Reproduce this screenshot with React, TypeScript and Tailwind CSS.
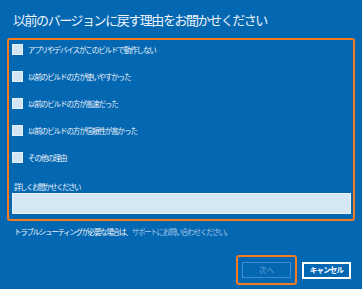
const reasons = [
  'アプリやデバイスがこのビルドで動作しない',
  '以前のビルドの方が使いやすかった',
  '以前のビルドの方が高速だった',
  '以前のビルドの方が信頼性が高かった',
  'その他の理由',
];

function Checkbox() {
  return <span className="block w-[11px] h-[11px] shrink-0 bg-[#d3e5f2] border border-[#e6f0f8]" />;
}

export default function App() {
  return (
    <div
      className="w-[362px] h-[289px] bg-[#0467b2] flex flex-col text-white overflow-hidden"
      style={{ fontFamily: '"Noto Sans CJK JP", "Noto Sans", sans-serif' }}
    >
      <h1 className="pl-[13px] pt-[11px] h-[27px] text-[13px] leading-[18px] tracking-[-1.45px] text-[#eef4fa] font-normal">
        以前のバージョンに戻す理由をお聞かせください
      </h1>

      <div className="ml-[7px] mt-[11px] w-[348px] h-[183px] border-2 border-[#f47b20] rounded-[3px] flex flex-col">
        <div className="pl-[3px] pt-[4px] flex flex-col gap-[16px]">
          {reasons.map((r) => (
            <div key={r} className="flex items-center h-[11px]">
              <Checkbox />
              <span className="ml-[5px] text-[7.5px] leading-[11px] tracking-[-1.1px] text-[#eaf2fa]">{r}</span>
            </div>
          ))}
        </div>

        <div className="mt-[19px] pl-[5px] h-[10px] text-[7.5px] leading-[10px] tracking-[-1.5px] text-[#eaf2fa]">
          詳しくお聞かせください
        </div>
        <div className="ml-[3px] mr-[2px] mt-[1px] h-[21px] bg-[#d5e7f3] border border-[#e9f2f9]" />
      </div>

      <p className="pl-[14px] mt-[6px] h-[10px] text-[7.5px] leading-[10px] tracking-[-1.3px] text-[#eef4fa]">
        トラブルシューティングが必要な場合は、 <span className="text-[#a9c8e6]">サポートにお問い合わせください。</span>
      </p>

      <div className="mt-[18px] flex justify-end items-center pr-[11px] gap-[5px]">
        <div className="w-[61px] h-[30px] border-2 border-[#f47b20] rounded-[3px] flex items-center justify-center">
          <button
            disabled
            className="w-[49px] h-[16px] border border-[#3f8bcb] text-[7.5px] leading-none text-[#5f9fd6] flex items-center justify-center"
          >
            次へ
          </button>
        </div>
        <button className="w-[49px] h-[17px] border-2 border-white text-[7.5px] font-bold leading-none tracking-[-0.8px] text-white flex items-center justify-center">
          キャンセル
        </button>
      </div>
    </div>
  );
}
